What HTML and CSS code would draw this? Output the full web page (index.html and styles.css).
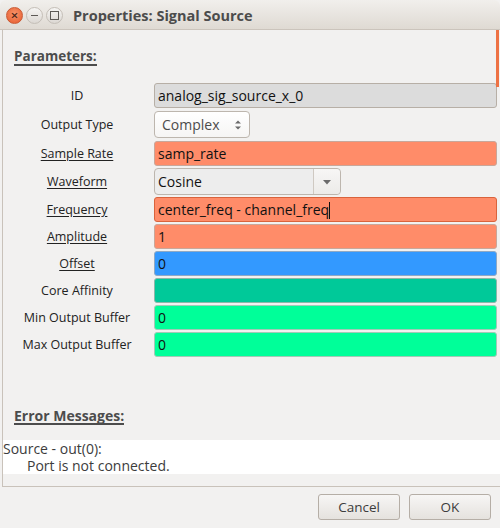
FILE: index.html
```html
<!DOCTYPE html>
<html lang="en">

<head>
  <meta charset="UTF-8">
  <title>Properties: Signal Source</title>
  <link rel="stylesheet" href="styles.css">
</head>

<body>
  <div class="window">
    <div class="titlebar">
      <div class="controls">
        <span class="ctl close">&#215;</span>
        <span class="ctl minimize"></span>
        <span class="ctl maximize"></span>
      </div>
      <h1>Properties: Signal Source</h1>
    </div>

    <div class="frame">
      <div class="scroll-thumb"></div>

      <div class="section params-section">
        <h2><span>Parameters:</span></h2>
        <div class="params">
          <div class="row">
            <label>ID</label>
            <div class="entry readonly">analog_sig_source_x_0</div>
          </div>
          <div class="row spin-row">
            <label>Output Type</label>
            <div class="spin">
              Complex
              <svg class="updown" width="8" height="12" viewBox="0 0 8 12">
                <path d="M1 4.5 L4 1.5 L7 4.5 Z M1 7.5 L4 10.5 L7 7.5 Z" fill="#6b6b6b" />
              </svg>
            </div>
          </div>
          <div class="row">
            <label class="cb">Sample Rate</label>
            <div class="entry real">samp_rate</div>
          </div>
          <div class="row select-row">
            <label class="cb">Waveform</label>
            <div class="select">
              <span class="value">Cosine</span>
              <span class="arrow">
                <svg width="10" height="6" viewBox="0 0 10 6">
                  <path d="M1 1 L9 1 L5 5.5 Z" fill="#6b6b6b" />
                </svg>
              </span>
            </div>
          </div>
          <div class="row">
            <label class="cb">Frequency</label>
            <div class="entry real focus">center_freq - channel_freq<span class="caret"></span></div>
          </div>
          <div class="row">
            <label class="cb">Amplitude</label>
            <div class="entry real">1</div>
          </div>
          <div class="row">
            <label class="cb">Offset</label>
            <div class="entry complex">0</div>
          </div>
          <div class="row">
            <label>Core Affinity</label>
            <div class="entry int-vector"></div>
          </div>
          <div class="row">
            <label>Min Output Buffer</label>
            <div class="entry int">0</div>
          </div>
          <div class="row">
            <label>Max Output Buffer</label>
            <div class="entry int">0</div>
          </div>
        </div>
      </div>

      <div class="section errors">
        <h2><span>Error Messages:</span></h2>
        <div class="log">
          <p>Source - out(0):</p>
          <p class="indent">Port is not connected.</p>
        </div>
      </div>
    </div>

    <div class="actions">
      <button>Cancel</button>
      <button>OK</button>
    </div>
  </div>
</body>

</html>
```

FILE: styles.css
```css
body {
  margin: 0;
  padding: 0;
  background: #f2f1f0;
  font-family: 'Open Sans', sans-serif;
  color: #3c3c3c;
}

* {
  box-sizing: border-box;
}

.window {
  width: 500px;
  height: 528px;
  overflow: hidden;
  background: #f2f1f0;
}

/* window decoration */
.titlebar {
  height: 30px;
  display: flex;
  align-items: center;
  padding-top: 1px;
  background: linear-gradient(#f1efec, #dfdad3);
  border-bottom: 1px solid #cbc4bc;
  border-radius: 6px 6px 0 0;
}

.controls {
  display: flex;
  gap: 3px;
  padding-left: 6px;
}

.ctl {
  width: 17px;
  height: 17px;
  border-radius: 50%;
  border: 1px solid #c4beb7;
  background: linear-gradient(#f6f5f3, #dcd8d3);
  display: flex;
  align-items: center;
  justify-content: center;
}

.ctl.close {
  background: radial-gradient(circle at 50% 40%, #f8946a, #e6582a);
  border-color: #c95a34;
  color: #4a2418;
  font-size: 13px;
  line-height: 1;
  font-weight: 600;
}

.ctl.minimize::after {
  content: '';
  width: 7px;
  height: 1px;
  background: #5d5a56;
}

.ctl.maximize::after {
  content: '';
  width: 7px;
  height: 7px;
  border: 1px solid #5d5a56;
}

.titlebar h1 {
  margin: 0 0 0 10px;
  font-size: 14.5px;
  font-weight: 700;
  color: #4c4c4c;
}

/* scrolled parameter area */
.frame {
  position: relative;
  height: 457px;
  margin-left: 2px;
  border-left: 1px solid #c9c2ba;
  border-bottom: 1px solid #c9c2ba;
}

.scroll-thumb {
  position: absolute;
  top: 0;
  right: 1px;
  width: 3px;
  height: 57px;
  background: #ee7244;
}

.section h2 {
  margin: 0;
  padding-left: 11px;
  font-size: 14px;
  line-height: 15px;
  font-weight: 700;
  color: #4c4c4c;
}

.params-section h2 {
  font-size: 13.5px;
}

.section h2 span {
  display: inline-block;
  line-height: 15px;
  border-bottom: 2px solid #4c4c4c;
}

.params-section {
  padding-top: 19px;
}

.params {
  margin-top: 16px;
  width: 494px;
}

.row {
  display: grid;
  grid-template-columns: 148px 1fr;
  column-gap: 3px;
  align-items: center;
  padding: 1px 0;
}

.spin-row {
  padding: 2px 0;
}

.row label {
  text-align: center;
  font-size: 12.5px;
  line-height: 16px;
  color: #222;
}

.row label.cb {
  text-decoration: underline;
  text-underline-offset: 2px;
}

.entry {
  height: 25px;
  line-height: 23px;
  padding: 0 3px;
  border: 1px solid #b7afa6;
  border-radius: 3px;
  font-size: 14px;
  color: #111;
  white-space: nowrap;
}

.entry.readonly {
  background: #dcdcdc;
}

.entry.real {
  background: #ff8c69;
  border-color: #c9a79a;
}

.entry.focus {
  border-color: #d9633c;
}

.entry.complex {
  background: #3399ff;
  border-color: #8fa9c4;
}

.entry.int-vector {
  background: #00c999;
  border-color: #8cb7aa;
}

.entry.int {
  background: #00ff99;
  border-color: #a3c9b7;
}

.caret {
  display: inline-block;
  width: 1px;
  height: 17px;
  background: #111;
  vertical-align: -4px;
}

.spin {
  width: 96px;
  height: 27px;
  padding: 0 7px;
  display: flex;
  align-items: center;
  justify-content: space-between;
  border: 1px solid #bdb6ae;
  border-radius: 4px;
  background: linear-gradient(#ffffff, #f6f5f4);
  font-size: 14px;
  color: #4c4c4c;
}

.select {
  width: 187px;
  height: 27px;
  display: flex;
  border: 1px solid #bdb6ae;
  border-radius: 4px;
  background: #ededed;
  font-size: 14px;
  color: #111;
}

.select .value {
  flex: 1;
  padding-left: 3px;
  line-height: 25px;
  border-right: 1px solid #cfc9c2;
}

.select .arrow {
  width: 26px;
  display: flex;
  align-items: center;
  justify-content: center;
  background: linear-gradient(#f7f6f5, #ecebe9);
  border-radius: 0 4px 4px 0;
}

/* validation output */
.errors {
  padding-top: 50px;
}

.log {
  margin-top: 15px;
  background: #fff;
  font-size: 14px;
  color: #3c3c3c;
}

.log p {
  margin: 0;
  line-height: 17px;
}

.log .indent {
  padding-left: 24px;
}

/* dialog buttons */
.actions {
  display: flex;
  justify-content: flex-end;
  gap: 9px;
  padding: 7px 9px 0 0;
}

.actions button {
  width: 82px;
  height: 26px;
  border: 1px solid #b5aea6;
  border-radius: 3px;
  background: linear-gradient(#f7f6f5, #e5e2de);
  font-family: 'Open Sans', sans-serif;
  font-size: 13.5px;
  color: #3c3c3c;
}
```
